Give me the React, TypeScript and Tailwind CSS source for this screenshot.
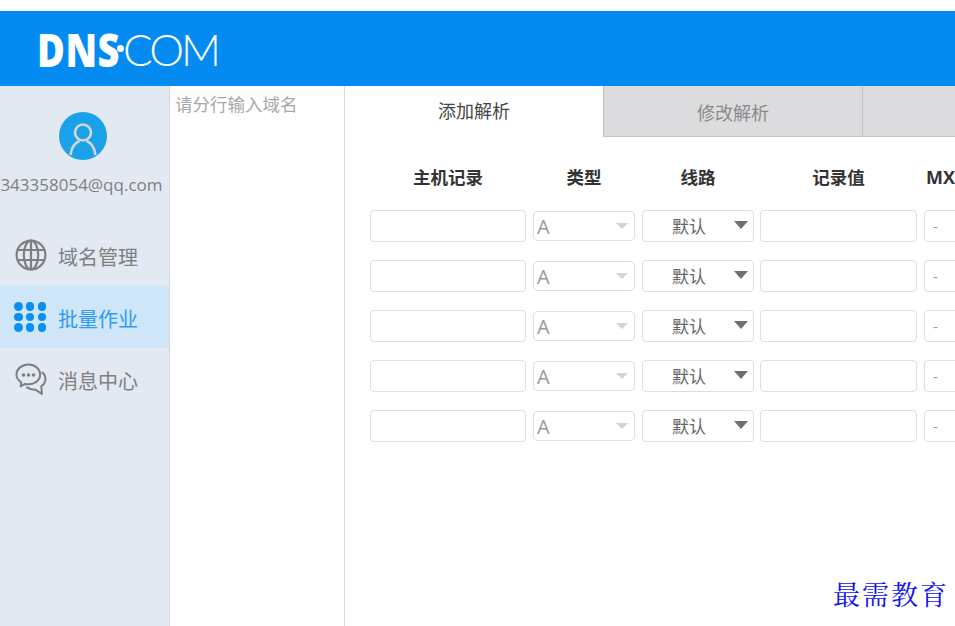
const FONT = "font-['Open_Sans','Noto_Sans_CJK_SC',sans-serif]"

function GlobeIcon() {
  return (
    <svg width="32" height="32" viewBox="0 0 32 32" fill="none" stroke="#7f7f7f" strokeWidth="2.2">
      <circle cx="16" cy="16" r="14.4" />
      <ellipse cx="16" cy="16" rx="7.2" ry="14.4" />
      <path d="M16 1.6v28.8M2.6 11h26.8M2.6 21h26.8" />
    </svg>
  )
}

function DotsIcon() {
  const dots = [0, 1, 2, 3, 4, 5, 6, 7, 8]
  return (
    <div className="-ml-[2px] grid w-[32px] grid-cols-3 gap-x-[3.5px] gap-y-[2px]">
      {dots.map((d) => (
        <span key={d} className="h-[8.5px] w-[8.5px] rounded-full bg-[#0a8ff0]" />
      ))}
    </div>
  )
}

function ChatIcon() {
  return (
    <svg width="32" height="33" viewBox="0 0 32 33" fill="none" stroke="#7f7f7f" strokeWidth="2" strokeLinecap="round" strokeLinejoin="round">
      <path d="M13.5 1.5C7 1.5 1.5 5.8 1.5 11.5c0 3.3 1.8 6 4.7 7.8l-.5 4 4.4-2.4c1.1.2 2.2.3 3.4.3 6.5 0 11.7-4.2 11.7-9.7S20 1.5 13.5 1.5z" />
      <path d="M27.4 9.5c1.9 1.7 3.1 3.9 3.1 6.4 0 3-1.6 5.5-4.2 7.1l.6 8-6.4-4.4c-3.2.2-6.2-.5-8.5-2.2" />
      <circle cx="8.5" cy="12" r="0.8" fill="#7f7f7f" />
      <circle cx="13.5" cy="12" r="0.8" fill="#7f7f7f" />
      <circle cx="18.5" cy="12" r="0.8" fill="#7f7f7f" />
    </svg>
  )
}

function NavItem({ icon, label, active }: { icon: React.ReactNode; label: string; active?: boolean }) {
  return (
    <div className={`flex h-[62px] items-center gap-[11px] pl-[15px] ${active ? 'bg-[#cfe6f9] text-[#2c9af2]' : 'text-[#808080]'}`}>
      <div className="flex w-[32px] shrink-0 justify-center">{icon}</div>
      <span className="pt-[5px] text-[20px] leading-none">{label}</span>
    </div>
  )
}

function Row() {
  return (
    <div className="flex h-[32px] items-center">
      <div className="h-[32px] w-[156px] shrink-0 rounded-[4px] border border-[#dedede] bg-white" />
      <div className="ml-[7px] flex h-[30px] w-[102px] shrink-0 items-center justify-between rounded-[4px] border border-[#dedede] pl-[3px] pr-[6px] text-[20px] text-[#999999]">
        <span className="pt-[1px]">A</span>
        <span className="h-0 w-0 border-x-[6px] border-t-[6px] border-x-transparent border-t-[#d4d4d4]" />
      </div>
      <div className="relative ml-[7px] flex h-[32px] w-[112px] shrink-0 items-center rounded-[4px] border border-[#dedede] pl-[29px] text-[17px] text-[#666666]">
        <span className="pt-[1px]">默认</span>
        <span className="absolute right-[5px] top-[10px] h-0 w-0 border-x-[7px] border-t-[8px] border-x-transparent border-t-[#707070]" />
      </div>
      <div className="ml-[6px] h-[32px] w-[157px] shrink-0 rounded-[4px] border border-[#dedede] bg-white" />
      <div className="ml-[7px] flex h-[32px] w-[60px] shrink-0 items-center rounded-[4px] border border-[#dedede] pl-[8px] text-[15px] text-[#999999]">
        -
      </div>
    </div>
  )
}

export default function App() {
  return (
    <div className={`relative flex h-[626px] w-[955px] flex-col overflow-hidden bg-white ${FONT}`}>
      <div className="h-[11px] shrink-0 bg-white" />
      <header className="flex h-[75px] shrink-0 items-center bg-[#038bf1] pl-[37px] text-white">
        <span className="inline-block w-[81px] origin-center scale-y-[1.2] text-[38px] font-black leading-none tracking-[0.5px] font-['Noto_Sans',sans-serif]">DNS</span>
        <span className="-ml-[1px] h-[7px] w-[7px] rounded-full bg-white" />
        <span className="-ml-[1px] text-[44px] font-light leading-none tracking-[-3px] font-['Lato',sans-serif]">COM</span>
      </header>

      <div className="flex min-h-0 flex-1">
        <aside className="w-[170px] shrink-0 border-r border-[#d5d8dd] bg-[#e3e9f3]">
          <div className="flex flex-col items-center pt-[26px]">
            <div className="mr-[4px] flex h-[48px] w-[48px] items-center justify-center overflow-hidden rounded-full bg-[#1ba1e9]">
              <svg width="48" height="48" viewBox="0 0 48 48" fill="none" stroke="#d3d8d8" strokeWidth="2.6">
                <circle cx="24" cy="20.5" r="8" />
                <path d="M11.5 43c1-7.5 4-12 9-14M36.5 43c-1-7.5-4-12-9-14" />
              </svg>
            </div>
            <div className="mt-[13px] w-[170px] whitespace-nowrap text-right text-[17px] leading-[24px] text-[#808080]">
              <span className="pr-[7px]">343358054@qq.com</span>
            </div>
          </div>
          <nav className="mt-[27px]">
            <NavItem icon={<GlobeIcon />} label="域名管理" />
            <NavItem icon={<DotsIcon />} label="批量作业" active />
            <NavItem icon={<ChatIcon />} label="消息中心" />
          </nav>
        </aside>

        <div className="w-[175px] shrink-0 border-r border-[#dcdcdc] pl-[5px] pt-[6px] text-[17.5px] leading-[24px] text-[#a8a8a8]">
          请分行输入域名
        </div>

        <main className="min-w-0 flex-1">
          <div className="flex h-[51px] text-[18px]">
            <div className="flex w-[258px] shrink-0 items-center justify-center text-[#444444]">添加解析</div>
            <div className="flex w-[259px] shrink-0 items-center justify-center border-b border-l border-[#c4c4c4] bg-[#dcdcde] pt-[4px] text-[#8a8a8a]">修改解析</div>
            <div className="flex-1 border-b border-l border-[#c4c4c4] bg-[#dcdcde]" />
          </div>
          <div className="flex h-[73px] items-center pl-[25px] pt-[7px] text-[17.5px] font-bold text-[#333333]">
            <div className="w-[156px] shrink-0 text-center">主机记录</div>
            <div className="ml-[7px] w-[102px] shrink-0 text-center">类型</div>
            <div className="ml-[7px] w-[112px] shrink-0 text-center">线路</div>
            <div className="ml-[6px] w-[157px] shrink-0 text-center">记录值</div>
            <div className="ml-[9px] shrink-0 text-[18px]">MX</div>
          </div>
          <div className="flex w-[700px] flex-col gap-[18px] pl-[25px]">
            <Row />
            <Row />
            <Row />
            <Row />
            <Row />
          </div>
        </main>
      </div>

      <div className="absolute left-[833px] top-[576px] text-[27px] leading-[36px] tracking-[2px] text-[#1010f0] font-['Noto_Serif_CJK_SC','Noto_Sans_CJK_SC',serif]">
        最需教育
      </div>
    </div>
  )
}
